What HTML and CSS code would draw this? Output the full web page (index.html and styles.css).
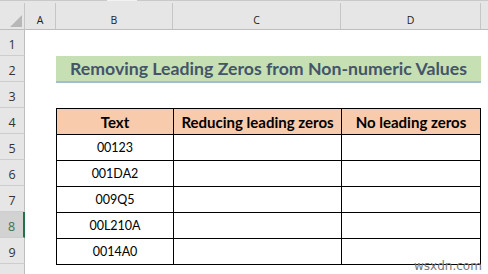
FILE: index.html
```html
<!DOCTYPE html>
<html>
<head>
<meta charset="utf-8">
<link rel="stylesheet" href="styles.css">
</head>
<body>
<div class="sheet">
  <div class="strip"><span class="s1"></span><span class="s2"></span><span class="s3"></span></div>

  <div class="corner"><span class="tri"></span></div>
  <div class="colh">A</div>
  <div class="colh">B</div>
  <div class="colh">C</div>
  <div class="colh">D</div>
  <div class="colh last"></div>

  <div class="rowh r1">1</div>
  <div class="rowh r2">2</div>
  <div class="rowh r3">3</div>
  <div class="rowh r4">4</div>
  <div class="rowh r5">5</div>
  <div class="rowh r6">6</div>
  <div class="rowh r7">7</div>
  <div class="rowh r8 sel">8</div>
  <div class="rowh r9">9</div>
  <div class="rowh r10"></div>

  <div class="title">Removing Leading Zeros from Non-numeric Values</div>

  <div class="tbl">
    <div class="th">Text</div>
    <div class="th">Reducing leading zeros</div>
    <div class="th">No leading zeros</div>
    <div class="td">00123</div><div class="td"></div><div class="td"></div>
    <div class="td">001DA2</div><div class="td"></div><div class="td"></div>
    <div class="td">009Q5</div><div class="td"></div><div class="td"></div>
    <div class="td">00L210A</div><div class="td"></div><div class="td"></div>
    <div class="td">0014A0</div><div class="td"></div><div class="td"></div>
  </div>

  <div class="mark">wsxdn.com</div>
</div>
</body>
</html>
```

FILE: styles.css
```css
html, body {
  margin: 0;
  padding: 0;
  background: #ffffff;
}
.sheet {
  position: relative;
  width: 488px;
  height: 274px;
  overflow: hidden;
  display: grid;
  grid-template-columns: 25px 31px 117px 168px 140px 7px;
  grid-template-rows: 3px 27px repeat(9, 26px) 10px;
  font-family: "Open Sans", "Noto Sans", sans-serif;
}
.strip {
  grid-column: 1 / -1;
  grid-row: 1;
  display: flex;
  background: #e6e6e6;
}
.strip span { height: 1px; }
.s1 { width: 107px; background: #c9c9c9; }
.s2 { width: 30px; background: #f2f2f2; }
.s3 { flex: 1; background: #c9c9c9; }

.corner {
  grid-column: 1;
  grid-row: 2;
  background: #e6e6e6;
  border-right: 1px solid #c6c6c6;
  border-bottom: 1px solid #bdbdbd;
  box-sizing: border-box;
  position: relative;
}
.tri {
  position: absolute;
  left: 10px;
  top: 12px;
  width: 12px;
  height: 12px;
  background: #b7b7b7;
  clip-path: polygon(100% 0, 100% 100%, 0 100%);
}
.colh {
  grid-row: 2;
  background: #e6e6e6;
  border-right: 1px solid #c6c6c6;
  border-bottom: 1px solid #bdbdbd;
  box-sizing: border-box;
  display: flex;
  align-items: center;
  justify-content: center;
  padding-top: 7px;
  font-size: 10.5px;
  color: #222;
}
.colh.last { border-right: none; }

.rowh {
  grid-column: 1;
  background: #e6e6e6;
  border-right: 1px solid #bdbdbd;
  border-bottom: 1px solid #cdcdcd;
  box-sizing: border-box;
  display: flex;
  align-items: flex-end;
  justify-content: center;
  padding-bottom: 2px;
  font-size: 12.5px;
  line-height: 16px;
  color: #333;
}
.r1 { grid-row: 3; }
.r2 { grid-row: 4; }
.r3 { grid-row: 5; }
.r4 { grid-row: 6; }
.r5 { grid-row: 7; }
.r6 { grid-row: 8; }
.r7 { grid-row: 9; }
.r8 { grid-row: 10; }
.r9 { grid-row: 11; }
.r10 { grid-row: 12; border-bottom: none; }
.rowh.sel {
  background: #d2d2d2;
  color: #3a7550;
  border-right: 2px solid #217346;
}

.title {
  grid-column: 3 / 6;
  grid-row: 4;
  align-self: start;
  height: 27px;
  box-sizing: border-box;
  background: #c6e0b4;
  border-bottom: 2px solid #a2bdd0;
  display: flex;
  align-items: center;
  justify-content: center;
  font-family: "Lato", "Open Sans", sans-serif;
  font-weight: 700;
  font-size: 17.7px;
  color: #44546a;
}

.tbl {
  grid-column: 3 / 6;
  grid-row: 6 / 12;
  align-self: start;
  display: grid;
  grid-template-columns: 116px 167px 138px;
  grid-auto-rows: 25px;
  gap: 1px;
  background: #000;
  border: 1px solid #000;
  font-family: "Lato", "Open Sans", sans-serif;
  font-size: 12.5px;
  color: #000;
}
.th, .td {
  display: flex;
  align-items: center;
  justify-content: center;
  background: #fff;
}
.th {
  background: #f8cbad;
  font-weight: 700;
  font-size: 15px;
}

.mark {
  position: absolute;
  left: 414px;
  top: 259px;
  font-family: "DejaVu Sans", sans-serif;
  font-size: 12px;
  color: #777;
  letter-spacing: 0;
}
```
